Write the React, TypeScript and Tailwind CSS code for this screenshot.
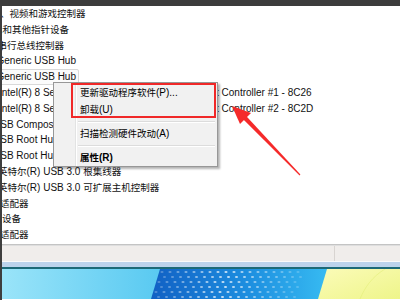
import React from "react";

type Row = { text: string; ml: string; sel?: boolean; tail?: string };

const rows: Row[] = [
  { text: "声音、视频和游戏控制器", ml: "-ml-[21px]" },
  { text: "鼠标和其他指针设备", ml: "-ml-[18.5px]" },
  { text: "通用串行总线控制器", ml: "-ml-[23.5px]" },
  { text: "Generic USB Hub", ml: "-ml-[5.5px]" },
  { text: "Generic USB Hub", ml: "-ml-[8.5px]", sel: true },
  { text: "Intel(R) 8 Series/C220 Series USB Enhanced Hos", ml: "-ml-[3px]", tail: "t Controller #1 - 8C26" },
  { text: "Intel(R) 8 Series/C220 Series USB Enhanced Hos", ml: "-ml-[3px]", tail: "t Controller #2 - 8C2D" },
  { text: "USB Composite Device", ml: "-ml-[9px]" },
  { text: "USB Root Hub", ml: "-ml-[9px]" },
  { text: "USB Root Hub", ml: "-ml-[9px]" },
  { text: "英特尔(R) USB 3.0 根集线器", ml: "-ml-[4px]" },
  { text: "英特尔(R) USB 3.0 可扩展主机控制器", ml: "-ml-[4px]" },
  { text: "网络适配器", ml: "-ml-[21px]" },
  { text: "系统设备", ml: "-ml-[19px]" },
  { text: "显示适配器", ml: "-ml-[21px]" },
];

// CJK glyphs in the shot are a touch narrower than the Latin ones
function Txt({ s }: { s: string }) {
  const parts = s.split(/([\u3000-\u9fff]+)/);
  return (
    <>
      {parts.map((p, i) =>
        /[\u3000-\u9fff]/.test(p) ? (
          <span key={i} className="text-[9.5px]">
            {p}
          </span>
        ) : (
          <React.Fragment key={i}>{p}</React.Fragment>
        )
      )}
    </>
  );
}

function DeviceRow({ row }: { row: Row }) {
  if (row.tail) {
    return (
      <div className="h-[15.8px] leading-[15.8px] flex whitespace-nowrap">
        <span className={`${row.ml} inline-block w-[217px] overflow-hidden shrink-0`}>{row.text}</span>
        <span>{row.tail}</span>
      </div>
    );
  }
  return (
    <div className="h-[15.8px] leading-[15.8px] flex whitespace-nowrap">
      {row.sel ? (
        <span className={`${row.ml} pl-[2px] pr-[2px] h-[15.8px] leading-[13.8px] border border-[#d9d9d9] bg-[#fbfbfb] rounded-[2px]`}>
          <Txt s={row.text} />
        </span>
      ) : (
        <span className={row.ml}>
          <Txt s={row.text} />
        </span>
      )}
    </div>
  );
}

function MenuItem({ label, bold }: { label: string; bold?: boolean }) {
  return (
    <div className={`h-[17px] leading-[17px] pl-[26px] whitespace-nowrap ${bold ? "font-bold" : ""}`}>
      <Txt s={label} />
    </div>
  );
}

function MenuSep() {
  return (
    <div className="h-[7px] flex flex-col justify-center pl-[24px] pr-[2px]">
      <div className="h-px bg-[#dcdcdc]" />
      <div className="h-px bg-white" />
    </div>
  );
}

function Wallpaper() {
  const dots: { x: number; y: number; o: number }[] = [];
  for (let r = 0; r < 6; r++) {
    for (let c = 0; c < 18; c++) {
      const x = 162 + c * 8 + (r % 2) * 4 - r * 1.5;
      const y = 3 + r * 5;
      const o = Math.max(0.15, 0.75 - Math.abs(c - 8) * 0.06);
      dots.push({ x, y, o });
    }
  }
  return (
    <svg width="398" height="30" viewBox="2 0 398 30" className="block">
      <defs>
        <linearGradient id="wl" x1="0" x2="1" y1="0" y2="0">
          <stop offset="0" stopColor="#9ae4f9" />
          <stop offset="1" stopColor="#58c9f1" />
        </linearGradient>
        <linearGradient id="wb" x1="0" x2="1" y1="0" y2="0">
          <stop offset="0" stopColor="#1160c4" />
          <stop offset="0.55" stopColor="#1d8fe0" />
          <stop offset="1" stopColor="#38bcf2" />
        </linearGradient>
        <linearGradient id="wy" x1="0" x2="1" y1="0" y2="1">
          <stop offset="0" stopColor="#fbfbb8" />
          <stop offset="1" stopColor="#eef58a" />
        </linearGradient>
      </defs>
      <rect x="2" y="0" width="160" height="30" fill="url(#wl)" />
      <polygon points="160,0 330,0 320,30 151,30" fill="url(#wb)" />
      {dots.map((d, i) => (
        <ellipse key={i} cx={d.x} cy={d.y} rx="1.6" ry="1" fill="#ffffff" opacity={d.o} />
      ))}
      <polygon points="327,0 400,0 400,30 318,30" fill="url(#wy)" />
      <path d="M360 30 C365 18 372 8 385 0" stroke="#e3ee7a" strokeWidth="1" fill="none" opacity="0.6" />
    </svg>
  );
}

export default function App() {
  return (
    <div className="relative w-[400px] h-[300px] overflow-hidden bg-white flex font-['Liberation_Sans','Noto_Sans_CJK_SC',sans-serif] text-[10px] text-[#111]">
      {/* window edge */}
      <div className="w-[2px] bg-[#3e3e3e] shrink-0" />

      <div className="flex-1 flex flex-col min-w-0">
        <div className="h-[6px] bg-[#3c3c3c] -ml-[2px]" />

        {/* device tree */}
        <div className="h-[238px] overflow-hidden">
          {rows.map((r, i) => (
            <DeviceRow key={i} row={r} />
          ))}
        </div>

        <div className="h-px bg-[#c4c4c4]" />
        <div className="h-px bg-[#dedede]" />

        {/* status bar */}
        <div className="h-[15px] bg-[#f0edeb] flex">
          <div className="w-[333px] border-r border-[#d8d4d1]" />
        </div>
        <div className="h-px bg-[#fafafa]" />
        <div className="h-[5px] bg-[#bcd3ec]" />
        <div className="h-[2px] bg-[#1d6a78]" />
        <Wallpaper />
      </div>

      {/* context menu */}
      <div className="absolute left-[53px] top-[82px] w-[165px] h-[85px] bg-[#f1f1f1] border border-[#979797] shadow-[2px_2px_2px_rgba(0,0,0,0.3)] py-[1px] text-[#000]">
        <div className="absolute left-[21px] top-0 bottom-0 w-px bg-[#e2e3e3]" />
        <div className="absolute left-[22px] top-0 bottom-0 w-px bg-white" />
        <div className="relative">
          <MenuItem label="更新驱动程序软件(P)..." />
          <MenuItem label="卸载(U)" />
          <MenuSep />
          <MenuItem label="扫描检测硬件改动(A)" />
          <MenuSep />
          <MenuItem label="属性(R)" bold />
        </div>
      </div>

      {/* annotation */}
      <div className="absolute left-[71px] top-[83px] w-[145px] h-[35px] border-2 border-[#f02828]" />
      <svg className="absolute left-0 top-0 pointer-events-none" width="400" height="300">
        <polygon points="232,106 251,113 240,124" fill="#f52a2a" />
        <polygon points="246.6,116.6 243.4,119.4 299.6,175.4 300.4,174.6" fill="#f52a2a" />
      </svg>
    </div>
  );
}
